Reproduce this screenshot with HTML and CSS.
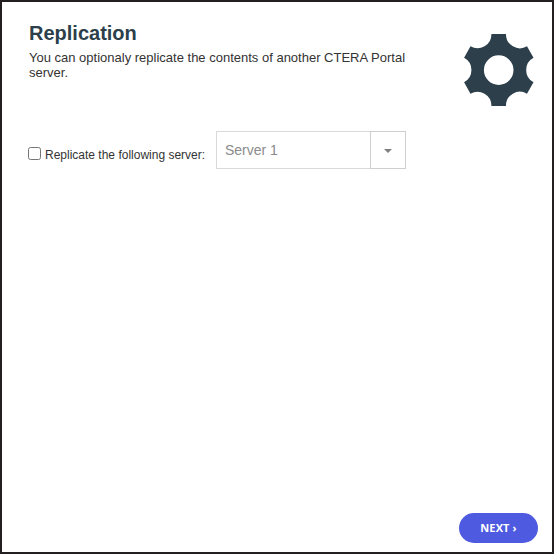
FILE: index.html
```
<!DOCTYPE html>
<html lang="en">

<head>
  <meta charset="UTF-8">
  <meta name="viewport" content="width=device-width, initial-scale=1.0">
  <title>Replication</title>
  <link rel="stylesheet" href="styles.css">
</head>

<body>
  <div class="wizard">
    <div class="header">
      <div class="intro">
        <h1>Replication</h1>
        <p>You can optionaly replicate the contents of another CTERA Portal server.</p>
      </div>
      <svg class="gear" width="70" height="72" viewBox="0 0 70 72">
        <path fill="#2c3f4b" fill-rule="evenodd" d="M27.4 0H42A13.9 13.9 0 0 0 63 12.3L69.5 23.7A13.9 13.9 0 0 0 69.5 48.2L63 59.7A13.9 13.9 0 0 0 42 72H27.4A13.9 13.9 0 0 0 6.5 59.7L0.1 48.2A13.9 13.9 0 0 0 0.1 23.7L6.5 12.3A13.9 13.9 0 0 0 27.4 0ZM34.7 21.3A14.8 14.8 0 1 0 34.7 50.9A14.8 14.8 0 1 0 34.7 21.3Z"/>
      </svg>
    </div>

    <div class="row">
      <input type="checkbox" id="replicate">
      <label for="replicate">Replicate the following server:</label>
      <div class="combo">
        <span class="value">Server 1</span>
        <span class="trigger">
          <svg width="8" height="4" viewBox="0 0 8 4"><path fill="#808080" d="M0 0H8L4 4Z"/></svg>
        </span>
      </div>
    </div>

    <div class="footer">
      <button type="button" class="next">NEXT ›</button>
    </div>
  </div>
</body>

</html>
```
FILE: styles.css
```
* {
  box-sizing: border-box;
}

body {
  margin: 0;
  background: #fff;
  font-family: "Liberation Sans", Arial, sans-serif;
  color: #333;
}

.wizard {
  height: 554px;
  width: 554px;
  border: 2px solid #231f20;
  display: flex;
  flex-direction: column;
}

.header {
  display: flex;
  justify-content: space-between;
  height: 129px;
  padding: 19px 18px 0 27px;
}

.intro {
  width: 390px;
}

h1 {
  margin: 0;
  font-size: 20px;
  line-height: 24px;
  color: #2c3f4b;
}

p {
  margin: 5px 0 0;
  font-size: 13px;
  line-height: 15px;
}

.gear {
  margin-top: 13px;
}

.row {
  display: flex;
  align-items: center;
  height: 38px;
  padding-left: 26px;
}

.row input {
  width: 13px;
  height: 13px;
  margin: 7px 4px 0 0;
}

.row label {
  width: 171px;
  margin-top: 10px;
  font-size: 12px;
  line-height: 14px;
  white-space: nowrap;
}

.combo {
  display: flex;
  width: 190px;
  height: 38px;
}

.value {
  width: 154px;
  padding-left: 8px;
  border: 1px solid #d9d9d9;
  border-right: 0;
  font-size: 14px;
  line-height: 36px;
  color: #8b8b8b;
}

.trigger {
  display: flex;
  align-items: center;
  justify-content: center;
  width: 36px;
  padding-top: 2px;
  border: 1px solid #cfcfcf;
}

.footer {
  display: flex;
  justify-content: flex-end;
  margin-top: auto;
  padding: 0 14px 9px 0;
}

.next {
  width: 79px;
  height: 30px;
  padding: 0 0 2px;
  border: 0;
  border-radius: 15px;
  background: #4e5ae0;
  color: #fff;
  font-family: "Open Sans", sans-serif;
  font-size: 11px;
  font-weight: bold;
  letter-spacing: 0.1px;
}
```
